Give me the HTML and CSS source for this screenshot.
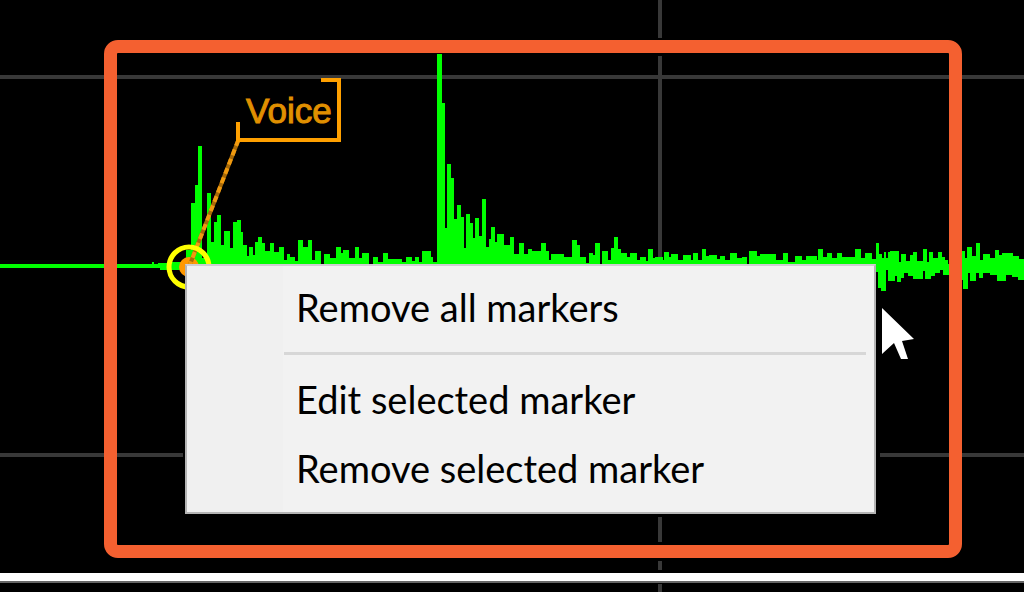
FILE: index.html
```html
<!DOCTYPE html>
<html lang="en">
<head>
	<meta charset="utf-8">
	<meta name="viewport" content="width=device-width, initial-scale=1">
	<title>Waveform markers</title>
	<link rel="stylesheet" href="styles.css">
</head>
<body>
	<main class="scope">
		<svg class="plot" viewBox="0 0 1024 592" preserveAspectRatio="xMinYMin slice" role="img" aria-label="Waveform">
			<!-- grid -->
			<path class="grid" d="M0 77H1024M0 455H183M880 455H1024M660 0V38M660 56V262M660 517V542M660 561V570M660 584V592"/>

			<!-- signal -->
			<path class="wave" d="M0 264H152V262H154V264H158V263H172V262H186V250H191V203H195V185H198V146H202V258H207V193H211V242H214V222H217V215H221V245H224V231H230V248H233V222H237V220H241V232H243V245H247V256H249V247H253V255H255V242H258V237H262V243H265V251H270V243H274V252H279V247H284V260H287V254H290V257H295V261H298V240H303V247H308V240H312V260H315V251H321V264H324V254H330V258H336V247H341V253H343V250H349V258H355V247H359V258H362V253H369V264H373V257H378V262H383V253H388V259H402V262H406V257H412V261H415V257H419V262H422V251H431V257H433V262H437V54H442V103H445V228H447V164H451V178H454V219H457V205H461V217H464V248H466V214H470V223H473V238H475V218H479V236H482V199H486V247H489V239H491V227H495V242H497V234H504V245H510V237H514V254H519V243H524V254H528V249H532V251H541V243H546V251H549V260H551V254H564V257H572V240H577V245H580V257H586V263H589V253H593V255H595V243H600V264H602V251H608V260H611V248H614V237H618V249H621V253H627V257H630V253H637V260H640V257H646V261H648V249H653V258H655V257H663V260H664V252H669V257H671V254H678V260H683V255H691V260H693V253H698V260H702V249H706V256H709V255H717V259H720V256H725V260H730V253H737V258H742V257H747V264H749V251H757V256H760V254H776V260H783V253H788V262H795V256H802V260H806V256H817V260H818V249H823V257H827V253H832V258H837V253H842V257H855V249H861V258H865V253H872V259H876V243H879V254H882V258H884V252H886V258H888V252H890V251H899V262H901V254H906V261H910V255H913V252H917V261H923V249H927V262H929V252H933V258H938V252H942V257H945V260H948V264H960V251H965V258H967V247H972V256H976V243H980V260H983V254H990V258H995V250H999V255H1002V253H1013V256H1019V259H1024V280H1018V277H1012V275H1006V281H997V275H990V273H983V278H979V273H976V281H970V273H968V289H963V280H960V275H943V270H940V273H935V276H931V279H925V271H923V279H913V276H908V273H904V278H901V282H897V276H895V281H888V270H886V291H881V288H878V272H876V268H182V270H160V268H0Z"/>

			<!-- marker -->
			<circle class="marker-dot" cx="189" cy="267" r="10"/>
			<path class="marker-line" d="M189 267L238 141"/>
			<path class="marker-line marker-line-dash" d="M189 267L238 141"/>
			<circle class="marker-ring" cx="189" cy="267" r="20"/>
			<path class="marker-box" d="M238 122V140H339V80H321"/>
			<text class="marker-label" x="246" y="123">Voice</text>

			<!-- ruler under the plot -->
			<rect class="ruler" x="0" y="573" width="1024" height="8"/>
			<rect class="ruler-shade" x="0" y="581" width="1024" height="2"/>
		</svg>

		<div class="highlight"></div>

		<div class="menu" role="menu">
			<button class="menu-item" type="button" role="menuitem">Remove all markers</button>
			<hr class="menu-line">
			<button class="menu-item" type="button" role="menuitem">Edit selected marker</button>
			<button class="menu-item" type="button" role="menuitem">Remove selected marker</button>
		</div>

		<svg class="pointer" viewBox="0 0 34 54" aria-hidden="true">
			<path d="M1 1V47L13 36L20 52H27L21 34L33 32Z"/>
		</svg>
	</main>
</body>
</html>
```
FILE: styles.css
```css
body {
	margin: 0;
	background: #000;
}

.scope {
	position: relative;
	height: 100vh;
	overflow: hidden;
}

.plot {
	display: block;
	width: 100%;
	height: 100%;
}

.grid {
	fill: none;
	stroke: #383838;
	stroke-width: 4px;
}

.wave {
	fill: #00ff00;
}

.marker-dot {
	fill: #ff9800;
}

.marker-line {
	stroke: #a86a08;
	stroke-width: 4px;
}

.marker-line-dash {
	stroke: #f09a10;
	stroke-dasharray: 6 4;
}

.marker-ring {
	fill: none;
	stroke: #ffff00;
	stroke-width: 5px;
}

.marker-box {
	fill: none;
	stroke: #ffa000;
	stroke-width: 4px;
}

.marker-label {
	font-family: "Liberation Sans", Arial, sans-serif;
	font-size: 35px;
	fill: #e09000;
	stroke: #e09000;
	stroke-width: 1px;
}

.ruler {
	fill: #fff;
}

.ruler-shade {
	fill: #666;
}

/* orange frame round the marker area */
.highlight {
	position: absolute;
	top: 40px;
	left: 104px;
	width: 858px;
	height: 518px;
	box-sizing: border-box;
	border: 13px solid #f46030;
	border-radius: 14px;
}

.menu {
	position: absolute;
	top: 264px;
	left: 185px;
	width: 691px;
	box-sizing: border-box;
	padding: 6px 8px 10px 0;
	border: 2px solid #b4b4b4;
	border-top-color: #d0cdd2;
	background: linear-gradient(to right, #f0f0f0 96px, #f2f2f2 96px);
}

.menu-item {
	display: block;
	width: 100%;
	height: 69px;
	padding: 0 0 0 109px;
	border: 0;
	background: none;
	color: #000;
	font-family: Lato, "Open Sans", sans-serif;
	font-size: 38px;
	text-align: left;
	white-space: nowrap;
}

.menu-line {
	height: 3px;
	margin: 11px 0 9px 97px;
	border: 0;
	background: #d7d7d7;
}

.pointer {
	position: absolute;
	top: 307px;
	left: 881px;
	width: 34px;
	height: 54px;
	fill: #fff;
}
```
